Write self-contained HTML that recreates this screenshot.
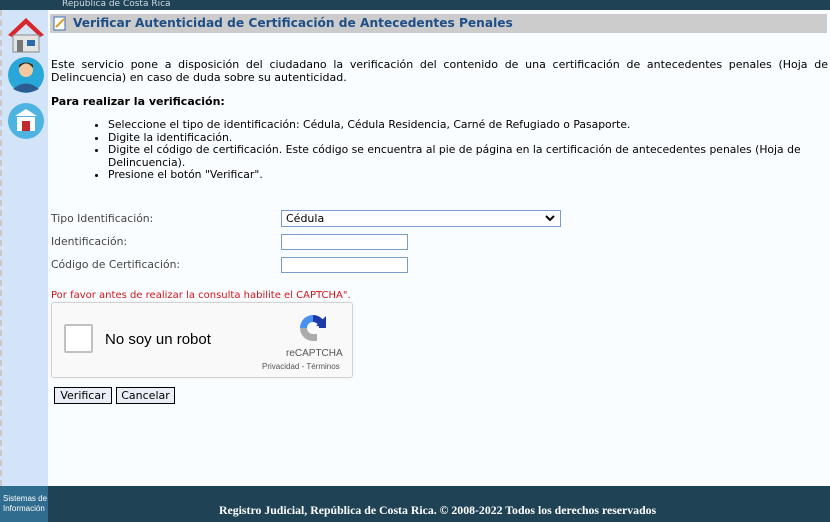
<!DOCTYPE html>
<html><head><meta charset="utf-8"><style>
*{margin:0;padding:0;box-sizing:border-box}
body{width:830px;height:522px;overflow:hidden;background:#fafdff;font-family:"DejaVu Sans",Verdana,sans-serif;font-size:11px;color:#000;position:relative}
.a{position:absolute}
#top{left:0;top:0;width:830px;height:10px;background:#1f4355;color:#cfdbe3;font-size:9px;line-height:8px;overflow:hidden}
#side{left:0;top:10px;width:48px;height:476px;background:#d3e4f8;border-left:2px dashed #c9c9c9}
#title{left:50px;top:14px;width:777px;height:19px;background:#cccccc;color:#1f4f86;font-weight:bold;font-size:12.2px;line-height:19px;padding-left:23px}
p{font-size:11px;line-height:13px}
.lbl{color:#444;font-size:10.8px}
input.t{position:absolute;width:127px;height:16px;border:1px solid #7a9cc9;background:#fff}
.btn{position:absolute;top:387px;height:17px;border:1px solid #000;background:#e9eef7;font-family:"DejaVu Sans",sans-serif;font-size:11px;line-height:15px;text-align:center}
#foot{left:0;top:486px;width:830px;height:36px;background:#1f4355;color:#fff;font-weight:bold;font-size:11px}
</style></head><body>
<div id="top" class="a"><span style="position:absolute;left:62px;top:0">República de Costa Rica</span></div>
<div id="side" class="a">
<svg class="a" style="left:4px;top:5px" width="40" height="40" viewBox="0 0 40 40"><path d="M20 3 L2 20 L6 22 L20 9 L34 22 L38 20Z" fill="#d8262c"/><rect x="7" y="20" width="26" height="17" fill="#e4e4e4" stroke="#888"/><rect x="11" y="25" width="6" height="12" fill="#777"/><rect x="21" y="25" width="8" height="6" fill="#2b6ca8"/></svg>
<svg class="a" style="left:5px;top:46px" width="38" height="38" viewBox="0 0 38 38"><circle cx="19" cy="19" r="18" fill="#2aa7d9"/><path d="M6 33 Q19 22 32 33 Q19 40 6 33Z" fill="#2c5c8f"/><circle cx="19" cy="14" r="7" fill="#f3c9a0"/><path d="M12 12 Q19 3 26 12 L26 9 Q19 4 12 9Z" fill="#3a2a1a"/></svg>
<svg class="a" style="left:5px;top:92px" width="38" height="38" viewBox="0 0 38 38"><circle cx="19" cy="19" r="18" fill="#4db3e0"/><path d="M8 14 L19 7 L30 14Z" fill="#fff"/><rect x="10" y="15" width="18" height="14" fill="#fff"/><rect x="15" y="19" width="8" height="10" fill="#c0292e"/></svg>
</div>
<div id="title" class="a"><svg class="a" style="left:3px;top:2px" width="14" height="15" viewBox="0 0 14 15"><rect x="1" y="1" width="11" height="13" fill="#fff" stroke="#3a6fb0"/><path d="M3 11 L11 3" stroke="#e0a020" stroke-width="2"/></svg>Verificar Autenticidad de Certificación de Antecedentes Penales</div>
<p class="a" style="left:51px;top:58px;width:777px;text-align:justify;text-align-last:left">Este servicio pone a disposición del ciudadano la verificación del contenido de una certificación de antecedentes penales (Hoja de Delincuencia) en caso de duda sobre su autenticidad.</p>
<p class="a" style="left:51px;top:95px;font-weight:bold">Para realizar la verificación:</p>
<ul class="a" style="left:108px;top:119px;width:705px;font-size:10.8px;line-height:12.5px">
<li>Seleccione el tipo de identificación: Cédula, Cédula Residencia, Carné de Refugiado o Pasaporte.</li>
<li>Digite la identificación.</li>
<li>Digite el código de certificación. Este código se encuentra al pie de página en la certificación de antecedentes penales (Hoja de Delincuencia).</li>
<li>Presione el botón "Verificar".</li>
</ul>
<div class="a lbl" style="left:51px;top:212px">Tipo Identificación:</div>
<div class="a lbl" style="left:51px;top:235px">Identificación:</div>
<div class="a lbl" style="left:51px;top:258px">Código de Certificación:</div>
<div class="a" style="left:281px;top:210px;width:280px;height:17px;border:1px solid #7a9cc9;background:#fff;font-size:11px;line-height:15px;padding-left:4px">Cédula<svg class="a" style="right:5px;top:4px" width="10" height="7" viewBox="0 0 10 7"><path d="M1 1 L5 5 L9 1" stroke="#000" stroke-width="2" fill="none"/></svg></div>
<input class="t" style="left:281px;top:234px">
<input class="t" style="left:281px;top:257px">
<div class="a" style="left:51px;top:290px;color:#d0141b;font-size:10px">Por favor antes de realizar la consulta habilite el CAPTCHA".</div>
<div class="a" style="left:51px;top:302px;width:302px;height:76px;background:#f9f9f9;border:1px solid #d3d3d3;border-radius:3px;box-shadow:0 0 3px rgba(0,0,0,.08);font-family:'Liberation Sans',Arial,sans-serif">
<div class="a" style="left:12px;top:21px;width:29px;height:29px;background:#fff;border:2px solid #c1c1c1;border-radius:2px"></div>
<div class="a" style="left:53px;top:28px;font-size:15px;color:#000">No soy un robot</div>
<svg class="a" style="left:245px;top:9px" width="32" height="32" viewBox="0 0 32 32"><path d="M16 3 A13 13 0 0 1 29 16 L22 16 A6 6 0 0 0 16 10Z" fill="#1c3aa9"/><path d="M29 4 L29 14 L19 14Z" fill="#1c3aa9"/><path d="M16 3 A13 13 0 0 0 3 16 L10 16 A6 6 0 0 1 16 10Z" fill="#4a90f0"/><path d="M3 16 A13 13 0 0 0 16 29 L20 29 L20 22 L16 22 A6 6 0 0 1 10 16Z" fill="#ababab"/></svg>
<div class="a" style="left:234px;top:45px;font-size:10px;color:#555">reCAPTCHA</div>
<div class="a" style="left:210px;top:59px;font-size:8px;color:#555">Privacidad - Términos</div>
</div>
<div class="btn" style="left:54px;width:58px">Verificar</div>
<div class="btn" style="left:116px;width:59px">Cancelar</div>
<div id="foot" class="a">
<div class="a" style="left:0;top:0;width:48px;height:36px;background:#2f6c8e;font-family:'Liberation Sans',sans-serif;font-weight:normal;font-size:8px;line-height:10px;padding-top:8px;padding-left:3px;color:#fff;white-space:nowrap">Sistemas de<br>Información</div>
<div class="a" style="left:219px;top:17px;font-family:'Liberation Serif',serif;font-size:11.8px">Registro Judicial, República de Costa Rica. © 2008-2022 Todos los derechos reservados</div>
</div>
</body></html>
